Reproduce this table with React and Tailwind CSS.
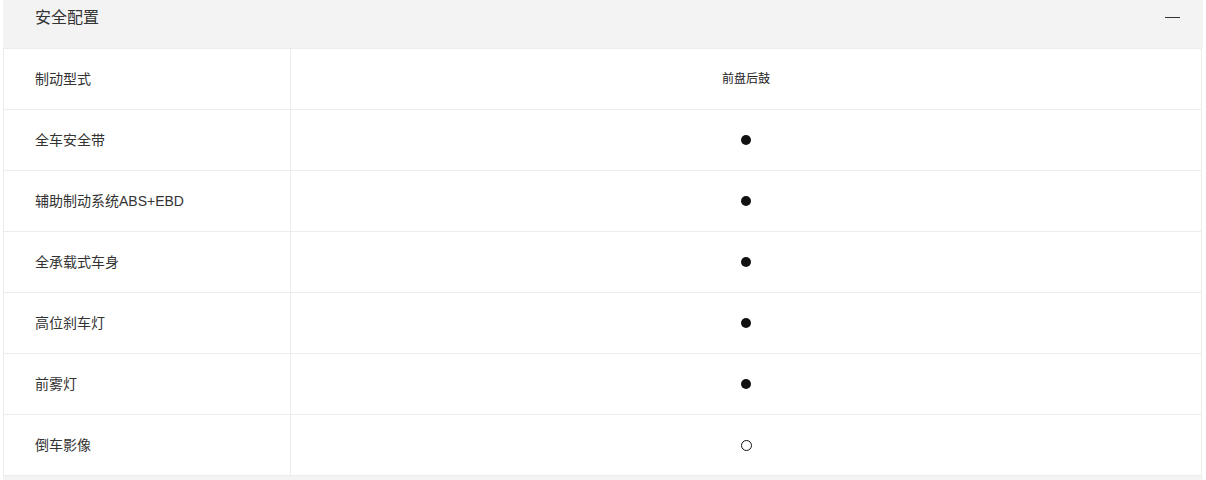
import React from 'react';

const rows = [
  { name: '制动型式', value: '前盘后鼓' },
  { name: '全车安全带', value: 'full' },
  { name: '辅助制动系统ABS+EBD', value: 'full' },
  { name: '全承载式车身', value: 'full' },
  { name: '高位刹车灯', value: 'full' },
  { name: '前雾灯', value: 'full' },
  { name: '倒车影像', value: 'empty' },
];

const Value = ({ value }) => {
  if (value === 'full') return <span className="block w-[10px] h-[10px] rounded-full bg-[#111]" />;
  if (value === 'empty') return <span className="block w-[11px] h-[11px] rounded-full border border-[#111]" />;
  return <span className="text-[12px] text-[#222]">{value}</span>;
};

export default function App() {
  return (
    <div
      className="w-[1206px] h-[480px] overflow-hidden bg-white pl-[3px]"
      style={{ fontFamily: '"Liberation Sans", "Noto Sans CJK SC", sans-serif' }}
    >
      <div className="w-[1200px]">
        <div className="h-[48px] bg-[#f3f3f3] flex items-start justify-between pt-[6px] pl-[32px] pr-[23px]">
          <span className="text-[16px] leading-[24px] text-[#333]">安全配置</span>
          <span className="mt-[11px] block w-[15px] h-px bg-[#333]" />
        </div>
        <div className="w-[1199px] border-t border-l border-r border-[#ececec]">
          {rows.map((r) => (
            <div key={r.name} className="flex h-[61px] border-b border-[#ececec]">
              <div className="w-[287px] border-r border-[#ececec] flex items-center pl-[31px] text-[14px] text-[#333]">
                {r.name}
              </div>
              <div className="flex-1 flex items-center justify-center">
                <Value value={r.value} />
              </div>
            </div>
          ))}
        </div>
        <div className="h-[10px] bg-[#f3f3f3]" />
      </div>
    </div>
  );
}
